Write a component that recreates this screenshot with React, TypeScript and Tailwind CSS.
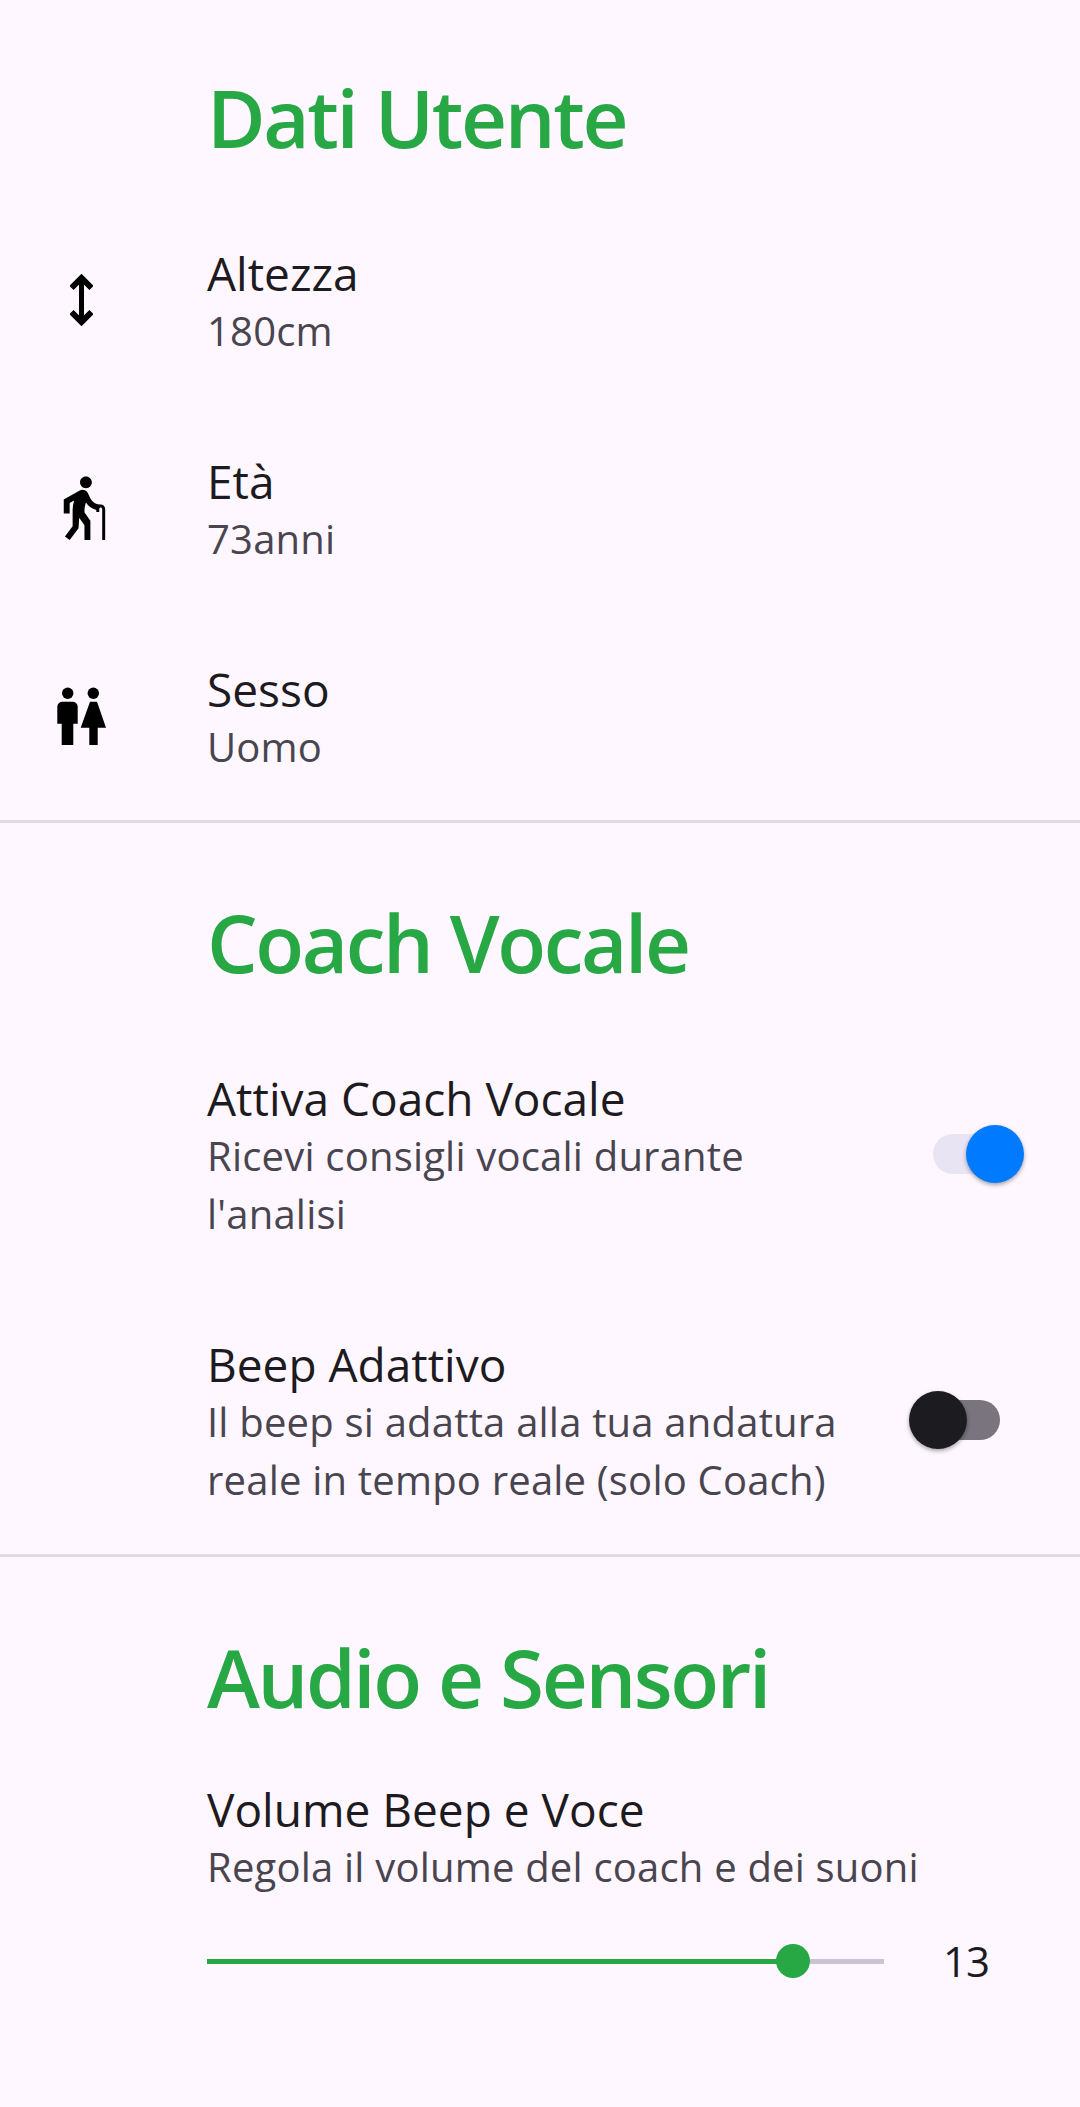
import { MdElderly } from "react-icons/md";

const font = "font-['Open_Sans','Noto_Sans',sans-serif]";

function HeightIcon() {
  return (
    <svg viewBox="0 0 23 52" className="h-[52px] w-[23px]" fill="none" stroke="black">
      <path d="M11.5 3V49" strokeWidth="5" />
      <path d="M1.5 14L11.5 4L21.5 14M1.5 38L11.5 48L21.5 38" strokeWidth="6" />
    </svg>
  );
}

function WcIcon() {
  return (
    <svg viewBox="0 0 50 58" className="ml-[2px] h-[58px] w-[50px]" fill="black">
      <circle cx="10.7" cy="6.3" r="5.7" />
      <path d="M5.3 14.7H15.7A5 5 0 0 1 20.7 19.7V36.7H16.3V58H4.7V36.7H0.3V19.7A5 5 0 0 1 5.3 14.7Z" />
      <circle cx="36.3" cy="6.3" r="5.7" />
      <path d="M33 14.7H40L49 40.7H40.7V58H32.3V40.7H23.7Z" />
    </svg>
  );
}

function Info({ icon, title, value }: { icon: React.ReactNode; title: string; value: string }) {
  return (
    <div className="flex h-[208px] items-center">
      <div className="mb-[5px] ml-[45px] mr-[90px] flex w-[72px] justify-center">{icon}</div>
      <div>
        <div className="text-[46px] leading-[58px] text-[#1d1b20]">{title}</div>
        <div className="text-[40px] leading-[58px] tracking-[0.2px] text-[#49454f]">{value}</div>
      </div>
    </div>
  );
}

function Heading({ children }: { children: string }) {
  return (
    <h2 className="pl-[207px] text-[80px] font-semibold leading-[100px] tracking-[-2.4px] text-[#28a745]">
      {children}
    </h2>
  );
}

function Toggle({ on }: { on: boolean }) {
  return (
    <div
      className={`mb-[4px] flex h-10 w-[67px] items-center rounded-full ${
        on ? "justify-end bg-[#e8e4f4]" : "justify-start bg-[#79747e]"
      }`}
    >
      <div
        className={`size-[58px] shrink-0 rounded-full shadow-[0_2px_4px_rgba(0,0,0,0.35)] ${
          on ? "-mr-6 bg-[#007bff]" : "-ml-6 bg-[#1c1b1f]"
        }`}
      />
    </div>
  );
}

function SwitchRow({ title, sub, on }: { title: string; sub: string[]; on: boolean }) {
  return (
    <div className="flex h-[266px] items-center pl-[207px] pr-[80px]">
      <div className="flex-1">
        <div className="text-[46px] leading-[58px] text-[#1d1b20]">{title}</div>
        {sub.map((s) => (
          <div key={s} className="text-[40px] leading-[58px] tracking-[0.2px] text-[#49454f]">
            {s}
          </div>
        ))}
      </div>
      <Toggle on={on} />
    </div>
  );
}

export default function App() {
  return (
    <div className={`h-[2107px] w-[1080px] overflow-hidden bg-[#fef7ff] ${font}`}>
      <div className="pt-[67px]">
        <Heading>Dati Utente</Heading>
        <div className="mt-[31px]">
          <Info icon={<HeightIcon />} title="Altezza" value="180cm" />
          <Info icon={<MdElderly size={71} color="black" />} title="Età" value="73anni" />
          <Info icon={<WcIcon />} title="Sesso" value="Uomo" />
        </div>
      </div>
      <div className="mt-[-2px] h-[3px] bg-[#e0dce4]" />
      <div className="pt-[69px]">
        <Heading>Coach Vocale</Heading>
        <div className="mb-[-1px] mt-[31px]">
          <SwitchRow
            title="Attiva Coach Vocale"
            sub={["Ricevi consigli vocali durante", "l'analisi"]}
            on
          />
          <SwitchRow
            title="Beep Adattivo"
            sub={["Il beep si adatta alla tua andatura", "reale in tempo reale (solo Coach)"]}
            on={false}
          />
        </div>
      </div>
      <div className="h-[3px] bg-[#e0dce4]" />
      <div className="pt-[70px]">
        <Heading>Audio e Sensori</Heading>
        <div className="mt-[53px] pl-[207px]">
          <div className="text-[46px] leading-[58px] text-[#1d1b20]">Volume Beep e Voce</div>
          <div className="text-[40px] leading-[58px] tracking-[0.2px] text-[#49454f]">
            Regola il volume del coach e dei suoni
          </div>
          <div className="mt-[36px] flex items-center">
            <div className="flex w-[677px] items-center">
              <div className="h-[5px] w-[570px] bg-[#28a745]" />
              <div className="-ml-[1px] size-[34px] shrink-0 rounded-full bg-[#28a745]" />
              <div className="h-[5px] flex-1 bg-[#cac4d0]" />
            </div>
            <div className="ml-[59px] text-[42px] leading-[58px] tracking-[-1px] text-[#1d1b20]">13</div>
          </div>
        </div>
      </div>
    </div>
  );
}
